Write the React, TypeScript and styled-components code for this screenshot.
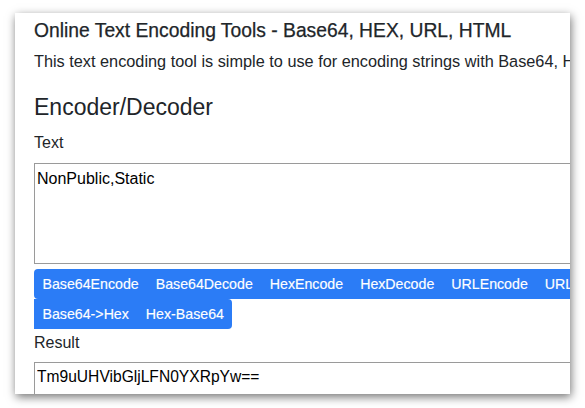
import styled, { createGlobalStyle } from 'styled-components';

const GlobalStyle = createGlobalStyle`
    html, body {
        margin: 0;
        padding: 0;
        background: #ffffff;
    }
    body {
        font-family: "Liberation Sans", Arial, sans-serif;
        color: #212529;
    }
`

const Stage = styled.div`
    width: 585px;
    height: 408px;
    box-sizing: border-box;
    padding: 13px 15px 14px 15px;
    overflow: hidden;
`

const Window = styled.div`
    width: 555px;
    height: 381px;
    background: #ffffff;
    overflow: hidden;
    box-shadow: 1px 3px 9px rgba(0, 0, 0, 0.55);
    box-sizing: border-box;
    padding: 6px 0 0 19px;
`

const Content = styled.div`
    width: 850px;
    display: flex;
    flex-direction: column;
`

const Title = styled.h1`
    margin: 0;
    font-size: 19.3px;
    line-height: 1.2;
    font-weight: 500;
    -webkit-text-stroke: 0.25px #212529;
    white-space: nowrap;
`

const Lead = styled.p`
    margin: 7px 0 0 0;
    font-size: 16.3px;
    line-height: 1.5;
    white-space: nowrap;
`

const Heading = styled.h3`
    margin: 20px 0 0 0;
    font-size: 23px;
    line-height: 1.2;
    font-weight: 400;
`

type LabelProps = {
    $top: number
}
const Label = styled.label<LabelProps>`
    display: block;
    margin-top: ${({ $top }) => $top}px;
    font-size: 16px;
    line-height: 24px;
`

const TextArea = styled.textarea`
    margin-top: 8px;
    width: 100%;
    height: 101px;
    box-sizing: border-box;
    border: 1px solid #9a9a9a;
    padding: 6px 2px;
    font-family: "Liberation Sans", Arial, sans-serif;
    font-size: 16px;
    line-height: 18px;
    color: #000;
    resize: none;
    outline: none;
`

const Input = styled.input`
    margin-top: 7px;
    width: 100%;
    height: 36px;
    box-sizing: border-box;
    border: 1px solid #9a9a9a;
    padding: 4px 2px 10px 2px;
    font-family: "Liberation Sans", Arial, sans-serif;
    font-size: 15.6px;
    line-height: 20px;
    color: #000;
    outline: none;
`

const ButtonGroup = styled.div`
    margin-top: 5px;
    display: flex;
    flex-wrap: wrap;
`

const Button = styled.button`
    border: none;
    background: #2b7cf6;
    color: #ffffff;
    font-family: "Liberation Sans", Arial, sans-serif;
    font-size: 14.2px;
    line-height: 20px;
    padding: 5px 8.5px;
    margin: 0;
    cursor: pointer;
    white-space: nowrap;
    border-radius: 0;
    -webkit-text-stroke: 0.15px #ffffff;

    &:first-child {
        border-top-left-radius: 4px;
        border-bottom-left-radius: 4px;
    }
    &:last-child {
        border-top-right-radius: 4px;
        border-bottom-right-radius: 4px;
    }
`

const actions = [
    'Base64Encode',
    'Base64Decode',
    'HexEncode',
    'HexDecode',
    'URLEncode',
    'URLDecode',
    'HTMLEncode',
    'HTMLDecode',
    'Base64->Hex',
    'Hex-Base64',
]

const App = () => {
    return (
        <>
            <GlobalStyle />
            <Stage>
                <Window>
                    <Content>
                        <Title>Online Text Encoding Tools - Base64, HEX, URL, HTML</Title>
                        <Lead>
                            This text encoding tool is simple to use for encoding strings with Base64, HEX, URL and HTML.
                        </Lead>
                        <Heading>Encoder/Decoder</Heading>
                        <Label $top={10}>Text</Label>
                        <TextArea defaultValue="NonPublic,Static" />
                        <ButtonGroup>
                            {actions.map(a => <Button key={a}>{a}</Button>)}
                        </ButtonGroup>
                        <Label $top={2}>Result</Label>
                        <Input readOnly value="Tm9uUHVibGljLFN0YXRpYw==" />
                    </Content>
                </Window>
            </Stage>
        </>
    );
};

export default App;
